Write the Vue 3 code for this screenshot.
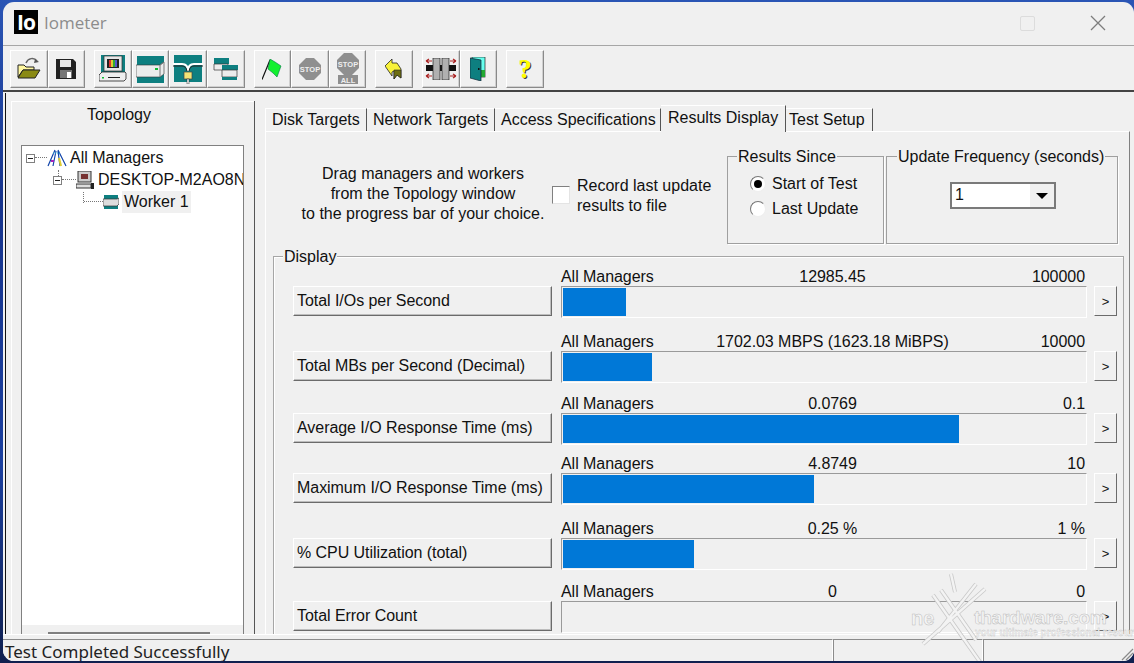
<script setup>
const tabs = [
  { name: 'Disk Targets', w: 102 },
  { name: 'Network Targets', w: 128 },
  { name: 'Access Specifications', w: 166 },
  { name: 'Results Display', w: 125, active: true },
  { name: 'Test Setup', w: 87 }
]
const rows = [
  { gap: 0, label: 'Total I/Os per Second', value: '12985.45', max: '100000', pct: 12 },
  { gap: 13, label: 'Total MBs per Second (Decimal)', value: '1702.03 MBPS (1623.18 MiBPS)', max: '10000', pct: 17 },
  { gap: 10, label: 'Average I/O Response Time (ms)', value: '0.0769', max: '0.1', pct: 75.9 },
  { gap: 8, label: 'Maximum I/O Response Time (ms)', value: '4.8749', max: '10', pct: 48 },
  { gap: 13, label: '% CPU Utilization (total)', value: '0.25 %', max: '1 %', pct: 25 },
  { gap: 11, label: 'Total Error Count', value: '0', max: '0', pct: 0 }
]
</script>

<template>
  <div class="desk">
    <div class="win">
      <header class="title">
        <span class="logo">Io</span>
        <span class="appname">Iometer</span>
        <span class="spacer"></span>
        <span class="maxbox"></span>
        <svg class="close" width="16" height="16" viewBox="0 0 16 16"><path d="M1 1L15 15M15 1L1 15" stroke="#7d7d7d" stroke-width="1.3" fill="none"/></svg>
      </header>

      <div class="toolbar">
        <div class="tgroup">
          <button class="tb">
            <svg width="26" height="24" viewBox="0 0 26 24"><path d="M10 6C12 1 18 0 21 4" stroke="#666" stroke-width="1.5" fill="none"/><path d="M19 2l4 3-5 1z" fill="#555"/><path d="M2 20V8h6l2 2h8v3H7L2 20z" fill="#fff7a0" stroke="#222"/><path d="M2 21l5-8h17l-5 8z" fill="#8a8a14" stroke="#222"/></svg>
          </button>
          <button class="tb">
            <svg width="20" height="20" viewBox="0 0 20 20"><path d="M0 0h17l3 3v17H0z" fill="#222"/><rect x="4" y="1" width="11" height="7" fill="#e8e8e8"/><rect x="4" y="11" width="12" height="8" fill="#777"/><rect x="11" y="13" width="4" height="6" fill="#fff"/></svg>
          </button>
        </div>
        <div class="tgroup">
          <button class="tb">
            <svg width="28" height="28" viewBox="0 0 28 28"><rect x="2" y="0" width="24" height="19" fill="#0e7f80"/><rect x="5" y="1" width="18" height="15" fill="#e6e6e6" stroke="#333" stroke-width=".7"/><rect x="8" y="4" width="12" height="9" fill="#222"/><path d="M10 5h2v7h-2z" fill="#d33"/><path d="M12 5h2v7h-2z" fill="#dc3"/><path d="M14 5h2v7h-2z" fill="#3a3"/><path d="M16 5h2v7h-2z" fill="#55c"/><path d="M0 20l3-3h23l1 1v6l-2 2H0z" fill="#eee" stroke="#222" stroke-width=".8"/><rect x="9" y="22" width="12" height="1" fill="#222"/><rect x="3" y="22" width="2" height="1.5" fill="#1b3"/></svg>
          </button>
          <button class="tb">
            <svg width="29" height="27" viewBox="0 0 29 27"><rect x="1" y="0" width="27" height="27" fill="#0e7f80"/><path d="M0 9h24l4-3v12l-4 3H0z" fill="#ececec" stroke="#333" stroke-width=".6"/><path d="M24 9v12M24 9l4-3" stroke="#777"/><rect x="19" y="12" width="3" height="2" fill="#1b3"/></svg>
          </button>
          <button class="tb">
            <svg width="30" height="29" viewBox="0 0 30 29"><rect x="1" y="0" width="28" height="27" fill="#0e7f80"/><path d="M0 9h9q6 0 6 7 0-7 6-7h9" stroke="#fff" stroke-width="2" fill="none"/><path d="M0 11h9q4 0 5 5M30 11h-9q-4 0-5 5" stroke="#222" stroke-width="1" fill="none"/><rect x="11" y="17" width="8" height="7" fill="#f2e476" stroke="#444" stroke-width=".7"/><rect x="14" y="24" width="2" height="5" fill="#fff" stroke="#222" stroke-width=".5"/></svg>
          </button>
          <button class="tb">
            <svg width="26" height="22" viewBox="0 0 26 22"><rect x="1" y="0" width="15" height="6" fill="#0e7f80"/><path d="M1 6h14v6H1z" fill="#ececec" stroke="#333" stroke-width=".7"/><rect x="9" y="7" width="16" height="5" fill="#0e7f80"/><path d="M9 12h15v7H9z" fill="#ececec" stroke="#333" stroke-width=".7"/><rect x="9" y="19" width="15" height="3" fill="#0e7f80"/></svg>
          </button>
        </div>
        <div class="tgroup">
          <button class="tb">
            <svg width="20" height="21" viewBox="0 0 20 21"><path d="M0 20.5L8 1" stroke="#111" stroke-width="1.2"/><path d="M8 0l5 3 6 4-4 11-4-4-5-4z" fill="#12f02e" stroke="#074" stroke-width=".6"/></svg>
          </button>
          <button class="tb">
            <svg width="22" height="22" viewBox="0 0 22 22"><path d="M7 0h8l7 7v8l-7 7H7l-7-7V7z" fill="#8f8f8f"/><text x="11" y="14" class="stoptxt">STOP</text></svg>
          </button>
          <button class="tb">
            <svg width="22" height="32" viewBox="0 0 22 32"><path d="M7 0h8l7 7v8l-7 7H7l-7-7V7z" fill="#8f8f8f"/><text x="11" y="14" class="stoptxt">STOP</text><rect x="1" y="22" width="20" height="9" fill="#8f8f8f"/><text x="11" y="30" class="stoptxt">ALL</text></svg>
          </button>
        </div>
        <div class="tgroup">
          <button class="tb">
            <svg width="18" height="21" viewBox="0 0 18 21"><path d="M0 7L7 0v4h5l4 6v9l-4-3-3 4v-8l-2 1v4z" fill="#f8f23a" stroke="#222" stroke-width=".8"/><path d="M9 11h7v8l-4-3-3 4z" fill="#6d6d10" stroke="#222" stroke-width=".6"/></svg>
          </button>
        </div>
        <div class="tgroup">
          <button class="tb">
            <svg width="32" height="22" viewBox="0 0 32 22"><rect x="1" y="7" width="30" height="6" fill="#111"/><rect x="8" y="0" width="7" height="22" fill="#b0b0b0" stroke="#222" stroke-width=".7"/><rect x="17" y="0" width="7" height="22" fill="#b0b0b0" stroke="#222" stroke-width=".7"/><path d="M1 3h6M1 3l3-2M1 3l3 2M31 3h-6M31 3l-3-2M31 3l-3 2M7 18H1M1 18l3-2M1 18l3 2M25 18h6M31 18l-3-2M31 18l-3 2" stroke="#a22" stroke-width="1.2" fill="none"/></svg>
          </button>
          <button class="tb">
            <svg width="16" height="24" viewBox="0 0 16 24"><rect x="2" y="0" width="13" height="20" fill="#6fe" stroke="#222" stroke-width=".7"/><rect x="10" y="13" width="5" height="7" fill="#2a3"/><path d="M0 1l11 2v21L0 21z" fill="#0e7f80" stroke="#123" stroke-width=".7"/><rect x="8" y="11" width="1.5" height="2" fill="#111"/></svg>
          </button>
        </div>
        <div class="tgroup">
          <button class="tb help">?</button>
        </div>
      </div>

      <div class="client">
        <aside class="topology">
          <div class="toptitle">Topology</div>
          <div class="tree">
            <div class="node n0">
              <span class="exp"></span><span class="dots d12"></span>
              <svg width="20" height="18" viewBox="0 0 20 18"><path d="M1 17L8 1M6 17L9 2M11 2l2 15M11 1l8 16" stroke="#14a" stroke-width="1.2" fill="none"/><path d="M6 4h8" stroke="#3bd" stroke-dasharray="1 1"/><path d="M4 12h3" stroke="#a2b" stroke-width="2"/><path d="M12 9l2 8" stroke="#dc3" stroke-width="2"/></svg>
              <span class="tlabel">All Managers</span>
            </div>
            <div class="node n1">
              <span class="exp"></span><span class="dots d14"></span>
              <svg width="18" height="18" viewBox="0 0 18 18"><rect x="2" y="0" width="13" height="11" fill="#ccc" stroke="#333"/><rect x="5" y="3" width="7" height="5" fill="#733"/><path d="M0 13h15v4H0z" fill="#ddd" stroke="#333"/><rect x="15" y="12" width="3" height="6" fill="#222"/></svg>
              <span class="tlabel">DESKTOP-M2AO8NT</span>
            </div>
            <div class="node n2">
              <span class="dots d19"></span>
              <svg width="16" height="14" viewBox="0 0 16 14"><rect x="1" y="0" width="14" height="14" fill="#0e7f80"/><path d="M0 4h14l2-1v6l-2 2H0z" fill="#ddd" stroke="#333" stroke-width=".7"/></svg>
              <span class="tlabel sel">Worker 1</span>
            </div>
            <div class="hscroll"><span class="thumb"></span></div>
          </div>
        </aside>

        <main class="pages">
          <nav class="tabs">
            <span v-for="t in tabs" :key="t.name" class="tab" :class="{ active: t.active }" :style="{ width: t.w + 'px' }">{{ t.name }}</span>
          </nav>
          <section class="page">
            <div class="toprow">
              <p class="hint">Drag managers and workers<br>from the Topology window<br>to the progress bar of your choice.</p>
              <label class="rec"><span class="check"></span><span>Record last update<br>results to file</span></label>
              <div class="group since">
                <span class="legend">Results Since</span>
                <div class="radio"><span class="dot on"></span>Start of Test</div>
                <div class="radio"><span class="dot"></span>Last Update</div>
              </div>
              <div class="group freq">
                <span class="legend">Update Frequency (seconds)</span>
                <div class="combo"><span class="cval">1</span><span class="cbtn"></span></div>
              </div>
            </div>
            <div class="display">
              <span class="legend">Display</span>
              <div v-for="r in rows" :key="r.label" class="row" :style="{ marginTop: r.gap + 'px' }">
                <div class="heads"><span>All Managers</span><span class="hval">{{ r.value }}</span><span class="hmax">{{ r.max }}</span></div>
                <div class="rowbody">
                  <button class="metric">{{ r.label }}</button>
                  <div class="bar"><div class="fill" :style="{ width: r.pct + '%' }"></div></div>
                  <button class="more">&gt;</button>
                </div>
              </div>
            </div>
          </section>
        </main>
      </div>

      <footer class="status">
        <span class="spane first"><span class="stext">Test Completed Successfully</span></span>
        <span class="spane mid"></span>
        <span class="spane last">
          <svg class="grip" width="14" height="14" viewBox="0 0 14 14"><path d="M13 2L2 13M13 6L6 13M13 10L10 13" stroke="#8a8a8a" stroke-width="1.2" fill="none"/></svg>
        </span>
      </footer>

      <div class="mark">
        <svg class="markx" width="100" height="92" viewBox="0 0 100 92"><g fill="none"><path d="M25 25L72 92M77 19L15 74M43 4L47 22M33 20L68 70M68 14L30 62" stroke="#c9c9c9" stroke-width="4"/><path d="M25 25L72 92M77 19L15 74M43 4L47 22M33 20L68 70M68 14L30 62" stroke="#f3f3f3" stroke-width="2.4"/></g></svg>
        <span class="m1">ne</span><span class="m2">thardware.com</span>
        <span class="m3">your ultimate professional resource</span>
      </div>
    </div>
  </div>
</template>

<style>
html, body { margin: 0; padding: 0; background: #1b2f80; overflow: hidden; }
</style>

<style scoped>
.desk {
  width: 1134px; height: 663px; overflow: hidden; box-sizing: border-box; padding: 2px 0 2px 3px;
  background: linear-gradient(180deg, #2a55b5 0, #17348c 30%, #1b3f9e 70%, #10204f 100%);
  font-family: "Liberation Sans", Arial, sans-serif; font-size: 16px; color: #111;
}
.win { position: relative; width: 1131px; height: 659px; background: #f0f0f0; border-radius: 11px; overflow: hidden; display: flex; flex-direction: column; }
.title { height: 43px; flex: none; display: flex; align-items: center; padding: 0 28px 0 11px; border-bottom: 1px solid #a6a6a6; box-sizing: content-box; }
.logo { width: 24px; height: 24px; margin-top: -3px; background: #000; color: #fff; font: bold 21px/24px "Open Sans", sans-serif; text-align: center; letter-spacing: -1px; }
.appname { margin: -2px 0 0 6px; font: 17px "Open Sans", sans-serif; color: #8c8c8c; }
.spacer { flex: 1; }
.maxbox { width: 13px; height: 13px; border: 1px solid #dcdcdc; border-radius: 2px; margin-right: 55px; margin-top: -1px; }
.close { margin-top: -1px; }
.toolbar { height: 46px; flex: none; box-sizing: border-box; padding: 4px 0 0 7px; display: flex; gap: 9px; border-bottom: 2px solid #444; }
.tgroup { display: flex; }
.tb { width: 37.6px; height: 38px; padding: 0; margin: 0; display: flex; align-items: center; justify-content: center; background: #f0f0f0; border: 1px solid; border-color: #fff #8a8a8a #8a8a8a #fff; box-shadow: inset -1px -1px 0 #d0d0d0; }
.help { font: bold 27px "Liberation Serif", serif; color: #ffff00; text-shadow: 1px 1px 0 #333; }
.stoptxt { font: bold 7.5px "Liberation Sans", sans-serif; fill: #eee; text-anchor: middle; }
.client { flex: 1; min-height: 0; display: flex; box-sizing: border-box; padding: 1px 0 0 2px; }
.topology { position: relative; width: 249px; flex: none; box-sizing: border-box; border-left: 1px solid #111; padding: 8px 0 0 5px; }
.toptitle { box-sizing: border-box; width: 243px; height: 44px; padding: 4px 27px 0 0; text-align: center; border-top: 1px solid #fff; line-height: 18px; }
.topology::after { content: ""; position: absolute; left: 248px; top: 8px; bottom: 0; width: 1px; background: #555; }
.topology::before { content: ""; position: absolute; left: 5px; top: 8px; bottom: 0; width: 1px; background: #fff; }
.tree { position: relative; margin-left: 10px; box-sizing: border-box; width: 223px; height: 490px; background: #fff; border: 1px solid #808080; border-bottom: 0; overflow: hidden; padding-top: 1px; }
.node { width: max-content; height: 22px; display: flex; align-items: center; white-space: nowrap; }
.node svg { flex: none; }
.n0 { padding-left: 4px; }
.n1 { padding-left: 31px; }
.n2 { padding-left: 62px; }
.exp { box-sizing: border-box; flex: none; width: 9px; height: 9px; border: 1px solid #808080; position: relative; background: #fff; }
.exp::after { content: ""; position: absolute; left: 1px; top: 3px; width: 5px; height: 1px; background: #222; }
.dots { flex: none; height: 1px; border-top: 1px dotted #777; }
.d12 { width: 12px; }
.d14 { width: 14px; }
.d19 { width: 19px; position: relative; }
.d19::before { content: ""; position: absolute; left: -1px; bottom: 0; height: 11px; border-left: 1px dotted #777; }
.n1::before { content: ""; position: absolute; left: 36px; top: 24px; height: 8px; border-left: 1px dotted #777; }
.tlabel { margin-left: 1px; padding: 0 2px; line-height: 22px; }
.n1 .tlabel { margin-left: 2px; }
.n2 .tlabel { margin-left: 3px; }
.sel { background: #f0f0f0; }
.hscroll { position: absolute; left: 0; right: 0; bottom: 0; height: 10px; background: #f0f0f0; }
.thumb { position: absolute; left: 26px; bottom: 0; width: 162px; height: 3px; background: #808080; }
.pages { width: 880px; flex: none; padding: 12px 0 0 11px; box-sizing: border-box; display: flex; flex-direction: column; min-height: 0; }
.tabs { display: flex; height: 26px; flex: none; }
.tab { box-sizing: border-box; height: 24px; margin-top: 3px; border-right: 1px solid #555; line-height: 22px; padding-left: 6px; white-space: nowrap; border-top: 1px solid #fff; }
.tab:first-child { border-left: 1px solid #fff; }
.tab:last-child { padding-left: 3px; }
.tab.active { height: 27px; margin-top: 0; line-height: 24px; padding-left: 7px; background: #f0f0f0; position: relative; z-index: 1; }
.page { flex: 1; min-height: 0; width: 865px; box-sizing: border-box; border-left: 1px solid #fff; border-top: 1px solid #fff; border-right: 1px solid #808080; padding: 24px 5px 0 7px; position: relative; overflow: hidden; }
.toprow { display: flex; height: 100px; flex: none; position: relative; }
.hint { box-sizing: border-box; margin: 8px 0 0 0; width: 279px; padding-left: 21px; line-height: 20px; text-align: center; white-space: nowrap; }
.rec { margin: 20px 0 0 0; width: 175px; display: flex; line-height: 20px; gap: 7px; }
.check { width: 18px; height: 18px; flex: none; box-sizing: border-box; margin-top: 10px; background: #fff; border: 1px solid; border-color: #808080 #e4e4e4 #e4e4e4 #808080; }
.group { position: relative; height: 88px; box-sizing: border-box; border: 1px solid #9f9f9f; box-shadow: 1px 1px 0 #fff; }
.since { width: 157px; padding: 14px 0 0 22px; margin-right: 2px; }
.freq { width: 232px; padding: 25px 0 0 63px; }
.legend { position: absolute; top: -10px; left: 9px; padding: 0 1px; background: #f0f0f0; line-height: 20px; white-space: nowrap; }
.freq .legend { left: 10px; }
.radio { height: 25px; display: flex; align-items: center; gap: 6px; line-height: 25px; white-space: nowrap; }
.dot { box-sizing: border-box; width: 16px; height: 16px; border-radius: 50%; border: 1px solid; border-color: #777 #eee #eee #777; background: #fff; position: relative; }
.dot.on::after { content: ""; position: absolute; left: 3px; top: 3px; width: 8px; height: 8px; background: #000; border-radius: 50%; }
.combo { box-sizing: border-box; width: 106px; height: 27px; border: 2px solid #7a7a7a; background: #fff; display: flex; justify-content: space-between; align-items: stretch; }
.cval { padding-left: 3px; line-height: 22px; }
.cbtn { width: 24px; background: #f0f0f0; border-left: 1px solid #fff; position: relative; }
.cbtn::after { content: ""; position: absolute; left: 6px; top: 9px; border: 6px solid transparent; border-top: 6px solid #000; border-bottom: 0; }
.display { position: relative; box-sizing: border-box; width: 851px; height: 400px; border: 1px solid #a6a6a6; border-bottom: 0; padding: 9px 0 0 19px; box-shadow: inset 1px 1px 0 #fff; }
.row { width: 825px; }
.heads { height: 20px; line-height: 22px; margin-left: 268px; position: relative; width: 525px; white-space: nowrap; letter-spacing: -.05px; }
.hval { position: absolute; left: 0; width: 543px; text-align: center; }
.hmax { position: absolute; right: 1px; }
.rowbody { display: flex; align-items: flex-start; }
.metric { box-sizing: border-box; width: 259px; height: 30px; margin: 0 9px 0 0; padding: 0 0 1px 3px; text-align: left; background: #f0f0f0; font: 16px "Liberation Sans", Arial, sans-serif; letter-spacing: -.05px; color: #111; border: 1px solid; border-color: #fff #6b6b6b #6b6b6b #fff; box-shadow: inset -1px -1px 0 #bdbdbd; white-space: nowrap; }
.bar { box-sizing: border-box; width: 526px; height: 32px; border: 1px solid; border-color: #9a9a9a #fff #fff #9a9a9a; padding: 1px; }
.fill { height: 100%; background: #0078d7; }
.more { box-sizing: border-box; width: 23px; height: 30px; margin: 0 0 0 7px; padding: 0; background: #f0f0f0; font: 13px "Liberation Sans", Arial, sans-serif; color: #111; border: 1px solid; border-color: #fff #6b6b6b #6b6b6b #fff; }
.status { position: absolute; left: 0; right: 0; bottom: 0; height: 27px; box-sizing: border-box; padding-top: 4px; background: #f0f0f0; display: flex; border-top: 1px solid #fff; z-index: 2; }
.spane { position: relative; box-sizing: border-box; height: 22px; border-top: 1px solid #8c8c8c; border-left: 1px solid #8c8c8c; border-right: 1px solid #fff; flex: none; }
.spane.first { width: 830px; border-left: 0; }
.spane.mid { width: 150px; }
.spane.last { flex: 1; border-right: 0; }
.stext { position: absolute; left: 2px; top: -1px; font: 17px/26px "Noto Sans", sans-serif; color: #222; white-space: nowrap; }
.grip { position: absolute; right: 0; bottom: 0; }
.mark { position: absolute; left: 905px; top: 568px; width: 226px; height: 91px; overflow: hidden; z-index: 3; pointer-events: none; }
.markx { position: absolute; left: 0; top: 0; }
.m1, .m2 { position: absolute; top: 37px; font: bold 20px "Liberation Sans", sans-serif; color: #f4f4f4; -webkit-text-stroke: .5px #bdbdbd; white-space: nowrap; }
.m1 { left: 3px; }
.m2 { left: 66px; font-size: 19px; letter-spacing: -.2px; }
.m3 { position: absolute; left: 67px; top: 57px; font: bold 10px "Liberation Sans", sans-serif; color: #f4f4f4; -webkit-text-stroke: .3px #bdbdbd; white-space: nowrap; }
</style>
